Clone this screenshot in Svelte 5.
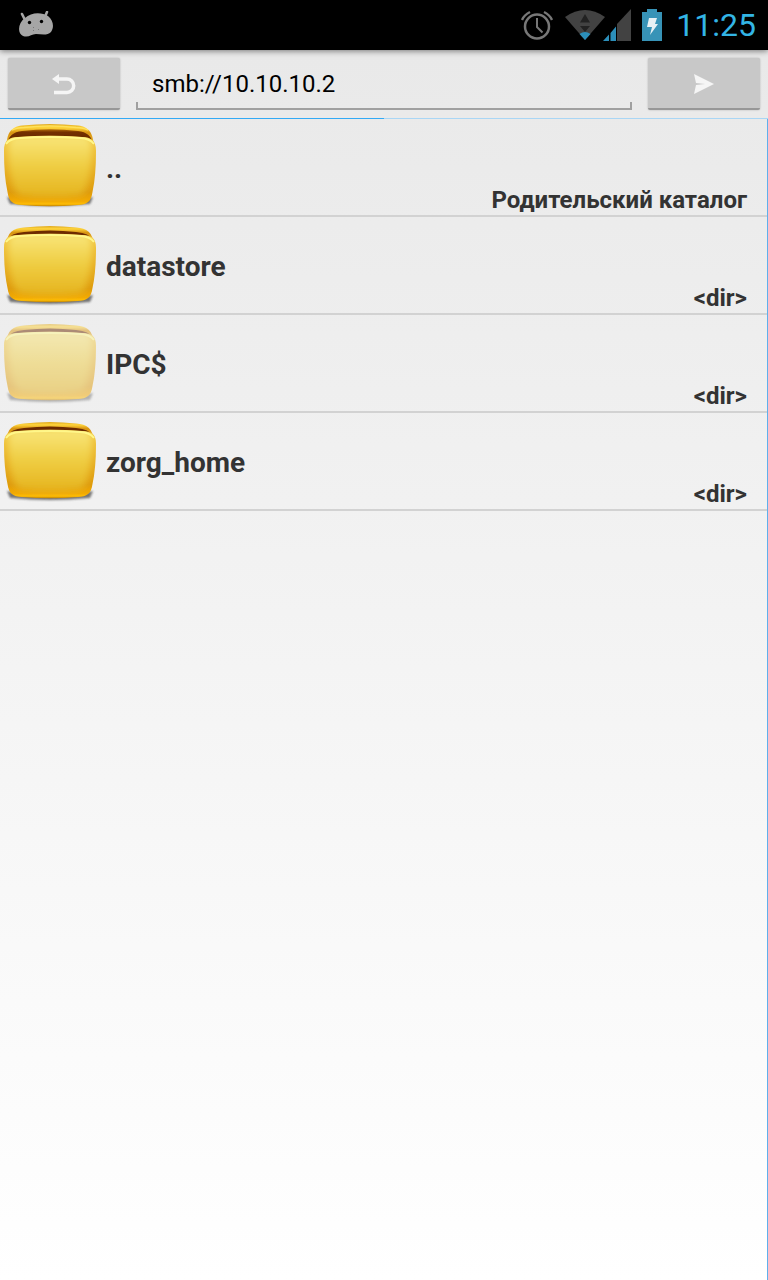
<script lang="ts">
	interface Entry {
		name: string;
		info: string;
		parent?: boolean;
		hidden?: boolean;
	}

	let address = $state('smb://10.10.10.2');

	const entries: Entry[] = [
		{ name: '..', info: 'Родительский каталог', parent: true },
		{ name: 'datastore', info: '<dir>' },
		{ name: 'IPC$', info: '<dir>', hidden: true },
		{ name: 'zorg_home', info: '<dir>' }
	];

	// Folder front: closed, and opened a little lower for the parent entry
	const closedFront =
		'M4 31C4 20 9 18.500 18 18Q50 15.500 82 18C91 18.500 96 20 96 31Q96 55 92.500 71C91 81 87 83.500 78 84Q50 86.500 22 84C13 83.500 9 81 7.500 71Q4 55 4 31Z';
	const openFront =
		'M4 32C4 21 9 18.500 18 18Q50 15.500 82 18C91 18.500 96 21 96 32Q96 57 92.500 73C91 83 87 85.500 78 86Q50 88.500 22 86C13 85.500 9 83 7.500 73Q4 57 4 32Z';
</script>

<svelte:head>
	<title>Files</title>
</svelte:head>

{#snippet folder(entry: Entry)}
	{@const front = entry.parent ? openFront : closedFront}
	<svg class:hidden={entry.hidden} width="100" height="96" viewBox="0 0 100 96" aria-hidden="true">
		<path d="M7 78Q50 86 93 78L90 85Q50 89 10 85Z" fill="#222" opacity=".6" filter="url(#soft)" />
		{#if entry.parent}
			<path d="M6.500 30C6 14 11 8 22 6.500Q50 3.500 78 6.500C89 8 94 14 93.500 30Z" fill="url(#back)" />
			<path d="M7.500 24Q9 13.500 22 12Q50 8.500 78 12Q91 13.500 92.500 24L91 25Q86 18 50 17.500Q14 18 9 25Z" fill="url(#inside)" />
			<path d="M12 11Q16 9 24 8.500Q50 5.500 76 8.500Q84 9 88 11" fill="none" stroke="#ffe15c" stroke-width="1.500" />
		{:else}
			<path d="M6.500 28C7 15 13 11.500 24 10.500Q50 7.500 76 10.500C87 11.500 93 15 93.500 28Z" fill="url(#back)" />
			<path d="M8 23Q10 16 24 15Q50 12 76 15Q90 16 92 23Q84 17.500 50 17.500Q16 17.500 8 23Z" fill="#6d2b00" />
		{/if}
		<path d={front} fill="url(#edge)" />
		<g clip-path="url(#{entry.parent ? 'open' : 'closed'}-clip)">
			<path
				d="M8 28Q8 14 22 16H78Q92 14 92 28Q92 52 87 67Q85 76 76 77Q50 80 24 77Q15 76 13 67Q8 52 8 28Z"
				fill="url(#front)"
				filter="url(#glow)"
			/>
			<path
				d="M6 25Q10 19.500 20 19Q50 17 80 19Q90 19.500 94 25"
				fill="none"
				stroke="#fff78a"
				stroke-width="2"
			/>
		</g>
	</svg>
{/snippet}

<svg class="paints" width="0" height="0" aria-hidden="true">
	<defs>
		<linearGradient id="front" x2="0" y2="1">
			<stop offset="0" stop-color="#f9e77c" />
			<stop offset=".5" stop-color="#efcd42" />
			<stop offset="1" stop-color="#e5b31d" />
		</linearGradient>
		<linearGradient id="edge" x2="0" y2="1">
			<stop offset="0" stop-color="#f3ca43" />
			<stop offset=".8" stop-color="#de9a0c" />
			<stop offset=".93" stop-color="#f3aa02" />
			<stop offset=".97" stop-color="#ffbd05" />
			<stop offset="1" stop-color="#b97c04" />
		</linearGradient>
		<linearGradient id="back" x2="0" y2="1">
			<stop offset="0" stop-color="#e0a91f" />
			<stop offset=".15" stop-color="#ffd53c" />
			<stop offset=".35" stop-color="#d89412" />
			<stop offset="1" stop-color="#f4c22c" />
		</linearGradient>
		<linearGradient id="inside" x2="0" y2="1">
			<stop offset="0" stop-color="#b46e0a" />
			<stop offset=".2" stop-color="#743000" />
			<stop offset="1" stop-color="#5c2300" />
		</linearGradient>
		<filter id="glow" x="-20%" y="-20%" width="140%" height="140%">
			<feGaussianBlur stdDeviation="3.500" />
		</filter>
		<filter id="soft" x="-10%" y="-50%" width="120%" height="200%">
			<feGaussianBlur stdDeviation="1.200" />
		</filter>
		<clipPath id="closed-clip"><path d={closedFront} /></clipPath>
		<clipPath id="open-clip"><path d={openFront} /></clipPath>
	</defs>
</svg>

<div class="screen">
	<header class="status-bar">
		<svg width="36" height="28" viewBox="0 0 36 28" aria-hidden="true">
			<path d="M4 3 7 9M29 1 26 8" stroke="#a6a6a6" stroke-width="2.600" stroke-linecap="round" />
			<path
				d="M7 7C13 1 24 1 30 5C36 10 36 17 33 21C29 25 23 23 18 23C13 23 11 27 5 25C-1 22 0 12 7 7Z"
				fill="#a6a6a6"
			/>
			<circle cx="11.500" cy="11.500" r="1.700" />
			<circle cx="23.500" cy="10.500" r="1.700" />
			<path d="M15.500 16v1M20.500 18v1M15.500 19v1" stroke="#777" />
		</svg>
		<div class="indicators">
			<svg width="32" height="32" viewBox="0 0 32 32" fill="none" stroke="#777" aria-hidden="true">
				<circle cx="16" cy="17.500" r="12" stroke-width="2.500" />
				<path d="M16 9V18l5.500 5.500" stroke-width="2" />
				<path d="M1 11Q3 6 9 3M23 3Q29 6 31 11" stroke-width="2.400" />
			</svg>
			<svg class="wifi" width="40" height="32" viewBox="0 0 40 32" aria-hidden="true">
				<path d="M0 8Q20-6 40 8L20 31Z" fill="#424242" />
				<path d="M20 5l5 8.500H15ZM15 17h10L20 23Z" fill="#222" />
				<path d="M14.500 25Q20 21 25.500 25L20 31Z" fill="#2c8fba" />
			</svg>
			<svg class="signal" width="30" height="32" viewBox="0 0 30 32" aria-hidden="true">
				<path d="M30 0v32H16V15Z" fill="#424242" />
				<path d="M2 32 8 25.500V32ZM9.500 24 15 17.500V32H9.500Z" fill="#2c8fba" />
			</svg>
			<svg class="battery" width="22" height="32" viewBox="0 0 22 32" aria-hidden="true">
				<path d="M1 3h5V0h10v3h5v29H1Z" fill="#3793b7" />
				<path d="M8 9h8l-2 6h3L9 26l2-8H6Z" fill="#e7f1f5" />
			</svg>
			<time>11:25</time>
		</div>
	</header>

	<form class="toolbar" onsubmit={(e) => e.preventDefault()}>
		<button type="button" aria-label="Back">
			<svg width="24" height="22" viewBox="0 0 24 22" aria-hidden="true">
				<path d="M0 6 7 1v10Z" fill="#f5f5f5" />
				<path d="M6 6h9a6.700 6.700 0 0 1 0 13.400H2" fill="none" stroke="#f5f5f5" stroke-width="3.500" />
			</svg>
		</button>
		<div class="address">
			<input type="text" aria-label="Address" bind:value={address} />
		</div>
		<button type="submit" aria-label="Go">
			<svg width="22" height="22" viewBox="0 0 22 22" aria-hidden="true">
				<path d="M1 1 21 11 1 21 3 12l9-1-9-1Z" fill="#f5f5f5" />
			</svg>
		</button>
	</form>

	<div class="pager" aria-hidden="true"></div>

	<main>
		<ul>
			{#each entries as entry}
				<li>
					{@render folder(entry)}
					<span class="name">{entry.name}</span>
					<span class="info">{entry.info}</span>
				</li>
			{/each}
		</ul>
	</main>
</div>

<style>
	:global(body) {
		margin: 0;
	}

	/* Shared gradients, takes no room in the page */
	.paints {
		position: absolute;
	}

	.screen {
		display: flex;
		flex-direction: column;
		min-height: 100vh;
		background: linear-gradient(#e8e8e8, #fff);
		color: #333;
		font-family: Roboto, 'Noto Sans', sans-serif;
	}

	/* System status bar */
	.status-bar {
		display: flex;
		align-items: center;
		justify-content: space-between;
		box-sizing: border-box;
		height: 50px;
		padding: 0 12px 0 18px;
		background: #000;
		box-shadow: 0 1px 6px rgba(0, 0, 0, 0.5);
	}

	.indicators {
		display: flex;
		align-items: center;
	}

	.wifi {
		margin-left: 12px;
	}

	.signal {
		margin-left: -4px;
	}

	.battery {
		margin: 0 13px 0 10px;
	}

	time {
		color: #33b5e5;
		font-size: 32px;
		line-height: 52px;
	}

	/* Address bar */
	.toolbar {
		display: flex;
		gap: 16px;
		padding: 8px;
	}

	button {
		display: flex;
		align-items: center;
		justify-content: center;
		width: 112px;
		height: 52px;
		padding: 2px 0 0;
		border: 0;
		border-bottom: 2px solid #979797;
		border-radius: 2px;
		background: #c8c8c8;
		box-shadow: 0 0 2px rgba(0, 0, 0, 0.25);
	}

	.address {
		display: flex;
		flex: 1;
		min-width: 0;
		border-bottom: 2px solid #a0a0a0;
		background:
			linear-gradient(#a0a0a0, #a0a0a0) left bottom / 2px 6px no-repeat,
			linear-gradient(#a0a0a0, #a0a0a0) right bottom / 2px 6px no-repeat;
	}

	input {
		width: 100%;
		padding: 2px 16px 0;
		border: 0;
		outline: 0;
		background: none;
		color: #000;
		font: 24px Roboto, 'Noto Sans', sans-serif;
	}

	/* Two pages, the left one is current */
	.pager {
		height: 1px;
		background: linear-gradient(to right, #33aaf5 50%, #a9d6f5 50%);
	}

	/* File list */
	main {
		flex: 1;
		border-right: 1px solid #5fb0ec;
	}

	ul {
		margin: 0;
		padding: 0;
		list-style: none;
	}

	li {
		display: flex;
		height: 96px;
		border-bottom: 2px solid #d2d2d2;
		font-weight: 700;
	}

	li svg,
	svg {
		flex-shrink: 0;
	}

	.hidden {
		opacity: 0.5;
	}

	.name {
		flex: 1;
		padding-left: 6px;
		font-size: 28px;
		line-height: 100px;
	}

	.info {
		align-self: flex-end;
		padding-right: 20px;
		font-size: 24px;
		line-height: 30px;
	}
</style>
